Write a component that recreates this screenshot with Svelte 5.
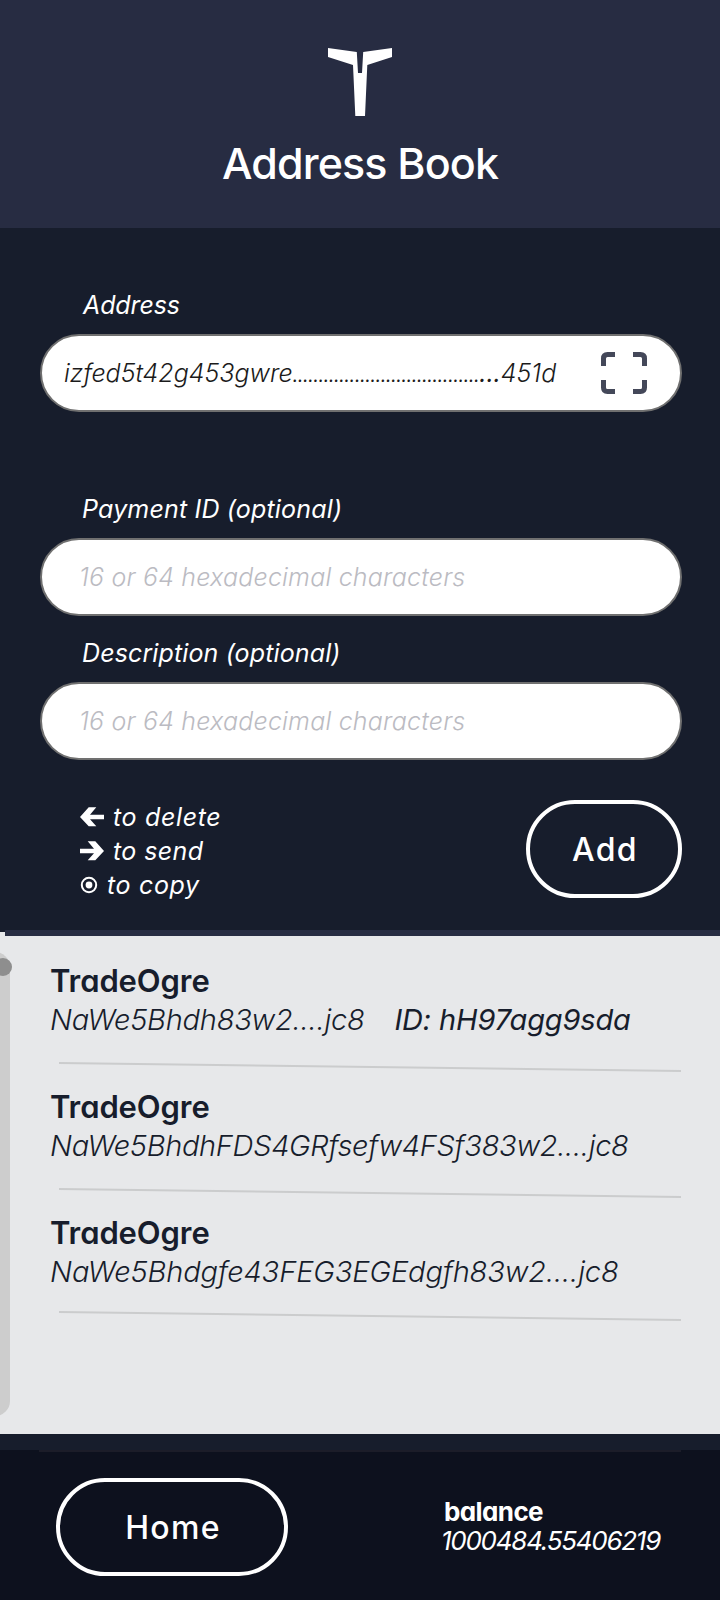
<script>
  const ellipses = '…'.repeat(12);
  const contacts = [
    { name: 'TradeOgre', address: 'NaWe5Bhdh83w2....jc8', id: 'ID: hH97agg9sda', cls: 'a1' },
    { name: 'TradeOgre', address: 'NaWe5BhdhFDS4GRfsefw4FSf383w2....jc8', cls: 'a2' },
    { name: 'TradeOgre', address: 'NaWe5Bhdgfe43FEG3EGEdgfh83w2....jc8', cls: 'a3' }
  ];
</script>

<div class="app">
  <header>
    <svg class="logo" width="64" height="68" viewBox="0 0 64 68">
      <path fill="#fff" d="M0 0 28.8 4 30 25h4l1.2-21L64 0v9L39.3 17 37 68h-9.7L25 17 0 9z" />
    </svg>
    <h1>Address Book</h1>
  </header>

  <main>
    <div class="label l1">Address</div>
    <div class="field filled">
      <span class="value"><span>izfed5t42g453gwre</span><span class="dots">{ellipses}</span><span class="dots3">...</span><span>451d</span></span>
      <svg class="scan" width="46" height="42" viewBox="0 0 46 42" fill="none" stroke="#444859" stroke-width="5">
        <path d="M2.5 14V6.5q0-4 4-4H14M32 2.500h7.500q4 0 4 4V14M43.500 28v7.500q0 4-4 4H32M14 39.500H6.500q-4 0-4-4V28" />
      </svg>
    </div>

    <div class="label l2">Payment ID (optional)</div>
    <div class="field"><span class="placeholder">16 or 64 hexadecimal characters</span></div>

    <div class="label l3">Description (optional)</div>
    <div class="field"><span class="placeholder">16 or 64 hexadecimal characters</span></div>

    <div class="actions">
      <div class="legend">
        <div class="hint">
          <svg width="24" height="20" viewBox="0 0 24 20"><path fill="#fff" d="M0 10 8.700.3h7.600L10 7.700h14v4.600H10l6.300 7H8.700z" /></svg>
          <span>to delete</span>
        </div>
        <div class="hint">
          <svg width="24" height="20" viewBox="0 0 24 20"><path fill="#fff" d="M24 10 15.300.3H7.700L14 7.700H0v4.600h14l-6.300 7h7.600z" /></svg>
          <span class="send">to send</span>
        </div>
        <div class="hint">
          <svg width="18" height="18" viewBox="0 0 18 18"><circle cx="9" cy="9" r="7.200" fill="none" stroke="#fff" stroke-width="2" /><circle cx="9" cy="9" r="3.400" fill="#fff" /></svg>
          <span>to copy</span>
        </div>
      </div>
      <button class="add">Add</button>
    </div>
  </main>

  <section class="list">
    <div class="track"></div>
    <div class="thumb"></div>
    {#each contacts as c}
      <article>
        <div class="name">{c.name}</div>
        <div class="addr"><span class={c.cls}>{c.address}</span>{#if c.id}<span class="pid">{c.id}</span>{/if}</div>
        <svg class="rule" width="622" height="10" viewBox="0 0 622 10"><path d="M0 1 622 9" stroke="#cbcccd" stroke-width="2" /></svg>
      </article>
    {/each}
  </section>

  <footer>
    <div class="bar">
      <button class="home">Home</button>
      <div class="balance">
        <strong>balance</strong>
        <em>1000484.55406219</em>
      </div>
    </div>
  </footer>
</div>

<style>
  :global(body) { margin: 0; background: #171d2c; }
  .app {
    width: 720px; height: 1600px; overflow: hidden;
    display: flex; flex-direction: column;
    font-family: Inter, "Open Sans", sans-serif;
    font-feature-settings: "cv11";
    color: #fff; background: #171d2c;
    white-space: nowrap;
  }
  svg { display: block; flex: none; }
  header {
    height: 228px; box-sizing: border-box; padding-top: 48px;
    display: flex; flex-direction: column; align-items: center;
    background: #272c42;
  }
  h1 { margin: 22px 0 0; font-size: 43px; line-height: 50px; font-weight: 450; letter-spacing: -0.85px; }
  main { height: 702px; box-sizing: border-box; padding: 62px 38px 0 40px; }
  .label { padding-left: 42px; font-size: 25px; line-height: 30px; font-style: italic; font-weight: 400; margin-bottom: 14px; letter-spacing: 0.17px; }
  .l1 { padding-left: 43px; letter-spacing: -0.1px; }
  .l2 { margin-top: 82px; }
  .l3 { margin-top: 22px; letter-spacing: 0.12px; }
  .field {
    height: 78px; box-sizing: border-box; border: 2px solid #707070; border-radius: 39px;
    background: #fff; display: flex; align-items: center; padding: 0 33px 0 37px;
    font-size: 25px; font-style: italic; font-weight: 300;
  }
  .filled { padding-left: 22px; justify-content: space-between; color: #1b1b1b; }
  .value { display: flex; align-items: baseline; }
  .dots { font-size: 17.1px; font-weight: 500; }
  .dots3 { font-weight: 400; }
  .placeholder { color: #bbbbc2; letter-spacing: 0.2px; }
  .actions { display: flex; justify-content: space-between; padding: 40px 0 0 40px; }
  .hint { height: 34px; display: flex; align-items: center; gap: 9px; font-size: 25px; font-style: italic; letter-spacing: 0.65px; }
  .send { letter-spacing: 0.4px; }
  button {
    box-sizing: border-box; height: 98px; padding: 2px 0 0 2px; border: 4px solid #fff; border-radius: 49px;
    background: none; color: #fff; font: 500 32px/88px Inter, "Open Sans", sans-serif; letter-spacing: 1.3px;
  }
  .add { width: 156px; }
  .home { width: 232px; }
  .list {
    position: relative; height: 498px; box-sizing: border-box; padding: 25px 39px 0 50px;
    background: #e7e8ea; color: #171d2c;
    margin-top: 6px;
  }
  .list::before { content: ""; position: absolute; left: 5px; right: 0; top: -6px; height: 6px; background: #272c42; }
  .list::after { content: ""; position: absolute; left: 0; width: 5px; top: -4px; height: 4px; background: #e7e8ea; }
  .track { position: absolute; left: -20px; top: 16px; width: 30px; height: 464px; border-radius: 15px; background: #cdcdcd; }
  .thumb { position: absolute; left: -6px; top: 22px; width: 18px; height: 18px; border-radius: 50%; background: #8e8e8e; }
  .name { font-size: 31px; line-height: 40px; font-weight: 600; letter-spacing: -0.1px; }
  .addr { display: flex; font-size: 29px; line-height: 38px; font-style: italic; font-weight: 300; }
  .a1 { letter-spacing: -0.22px; }
  .a2 { letter-spacing: -0.31px; }
  .a3 { letter-spacing: -0.12px; }
  .pid { margin-left: 30px; font-weight: 450; letter-spacing: -0.15px; }
  .rule { margin: 23px 0 15px 9px; }
  article:last-child .rule { margin-top: 20px; }
  footer { height: 166px; box-sizing: border-box; padding-top: 16px; }
  .bar {
    position: relative; height: 150px; box-sizing: border-box; padding: 28px 58px 0 56px;
    display: flex; justify-content: space-between; background: #0d111e;
  }
  .bar::before { content: ""; position: absolute; left: 39px; right: 39px; top: 0; height: 2px; background: #1c1d29; }
  .balance { width: 221px; padding-top: 19px; font-size: 26px; }
  .balance strong, .balance em { display: block; line-height: 29px; }
  .balance strong { font-weight: 700; padding-left: 3px; letter-spacing: -0.6px; }
  .balance em { font-weight: 400; letter-spacing: -1.25px; line-height: 30px; }
</style>
